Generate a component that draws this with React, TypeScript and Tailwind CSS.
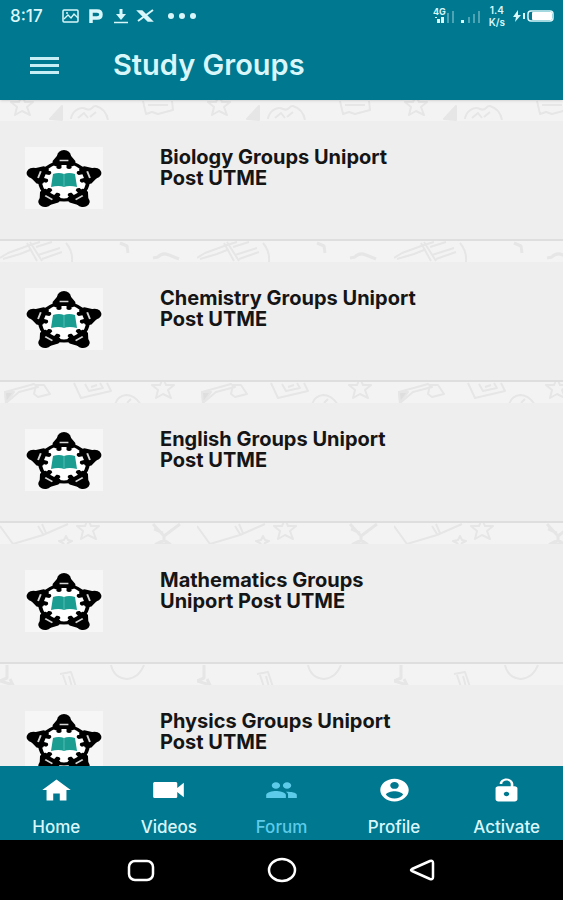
import type { ReactNode } from 'react';
import type { IconType } from 'react-icons';
import { IoMdContact, IoMdHome, IoMdPeople, IoMdUnlock, IoMdVideocam } from 'react-icons/io';

interface Tab {
  label: string;
  icon: IconType;
  active?: boolean;
}

const groups = [
  'Biology Groups Uniport Post UTME',
  'Chemistry Groups Uniport Post UTME',
  'English Groups Uniport Post UTME',
  'Mathematics Groups Uniport Post UTME',
  'Physics Groups Uniport Post UTME',
];

const tabs: Tab[] = [
  { label: 'Home', icon: IoMdHome },
  { label: 'Videos', icon: IoMdVideocam },
  { label: 'Forum', icon: IoMdPeople, active: true },
  { label: 'Profile', icon: IoMdContact },
  { label: 'Activate', icon: IoMdUnlock },
];

const STAR = 'M0-11 3-4 11-4 5 1 8 9 0 5-7 9-5 1-11-4-3-4Z';

// School doodles that show between the cards, one set per row
const doodles: ReactNode[] = [
  <>
    <path d={STAR} transform="translate(22 6)" />
    <path d="M50 19 62 6V20Z" fill="#e6e6e6" />
    <path d="M71 19C72 11 80 6 86 9S92 5 96 6Q106 9 108 20M78 18 84 13 88 18M90 17 96 12" />
    <path d="M143 1 146 14 152 12 158 14 173 10 172 1M148 5H168" />
  </>,
  <>
    <path d="M0 17 8 12 30 4 40 1M3 18 20 13 30 9M27 2 37 20M30 1 42 20" />
    <path d="M36 6 52 1M38 14 60 7M42 18 62 11M66 2Q73 10 72 21" />
    <path d="M120 2 127 5 128 12" strokeWidth="3" />
    <path d="M153 17 158 16Q162 11 169 14L179 18" strokeWidth="3" />
  </>,
  <>
    <path d="M5 10 34 2 38 5 19 10 6 21Z" />
    <path d="M5 10 14 10 6 21Z" fill="#dedede" />
    <path d="M36 3 44 3 50 12 38 15 34 12Z" />
    <path d="M74 1 81 16 111 9 107 1M85 2 89 9 103 6 100 1M91 5 97 3" />
    <path d="M115 23Q117 14 126 13 135 13 141 23M127 21 131 17" />
    <path d={STAR} transform="translate(163 7)" />
  </>,
  <>
    <path d="M0 3 13 21 43 12 68 1M38 3 43 11M42 1 46 10" />
    <path d="M66 13 68 17 72 18 68 20 66 24 63 20 59 18 64 17Z" />
    <path d={STAR} transform="translate(88 7)" />
    <path d="M153 1 164 13 180 1M154 6 163 10M164 11V17L156 21H170L164 17" strokeWidth="3" />
  </>,
  <>
    <path d="M7 1V14L0 17 13 21 10 15" strokeWidth="3" />
    <path d="M60 10 71 8 76 23M63 11 67 23M69 12 72 23" />
    <path d="M111 1Q114 14 127 15 139 14 144 1" />
  </>,
];

function DoodleStrip({ index }: { index: number }) {
  return (
    <svg className="block h-[21px] w-full bg-[#f3f3f3]" aria-hidden="true">
      <defs>
        <pattern id={`doodle-${index}`} width="197" height="21" patternUnits="userSpaceOnUse">
          <g fill="none" stroke="#e6e6e6" strokeWidth="2" strokeLinejoin="round">
            {doodles[index]}
          </g>
        </pattern>
      </defs>
      <rect width="100%" height="100%" fill={`url(#doodle-${index})`} />
    </svg>
  );
}

function GroupLogo() {
  return (
    <svg viewBox="0 0 78 62" className="h-[62px] w-[78px] shrink-0 bg-[#f6f6f6]" aria-hidden="true">
      <g transform="translate(39 34) scale(1.26 1)">
        <circle r="19" fill="#fff" stroke="#000" strokeWidth="3" />
        {[0, 72, 144, 216, 288].map((angle) => (
          <g key={angle} transform={`rotate(${angle})`}>
            <circle cy="-25.500" r="5.400" />
            <path d="M-5-26Q-7-23-9-20L-9-17Q-7-14-6-15L-6-13Q-4-11-2-13L-2-16H2L2-13Q4-11 6-13L6-15Q7-14 9-17L9-20Q7-23 5-26Z" />
            <path d="M-3.500-20.500H3.500" fill="none" stroke="#d5d5d5" strokeWidth="1.500" />
          </g>
        ))}
      </g>
      <path d="M28 27Q34 25 39 27 44 25 50 27L52 40Q44 38 39 40 34 38 26 40Z" fill="#1b9d91" />
      <path d="M39 27V40" stroke="#54bdb2" strokeWidth="1" />
    </svg>
  );
}

function StatusBar() {
  return (
    <div className="flex h-8 items-center pr-2 pl-[10px] text-[#d9f7fb]">
      <span className="w-[51px] text-[17px] leading-5 font-medium">8:17</span>
      <svg viewBox="0 0 138 16" className="h-4 w-[138px]" fill="none" stroke="currentColor" aria-hidden="true">
        <rect x="2" y="2" width="15" height="12" rx="1" strokeWidth="1.500" />
        <path d="M3 11 7 7 10 10 13 6 17 10M5 5H7" strokeWidth="1.300" />
        <path d="M30 15V3H36Q40 3 40 6.500T36 10H31" strokeWidth="3.500" />
        <path d="M60 1V7" strokeWidth="3" />
        <path d="M55 6H65L60 12Z" fill="currentColor" stroke="none" />
        <path d="M53 14.500H67" strokeWidth="1.500" />
        <path d="M77 3H81L91 13H87Z" fill="currentColor" strokeWidth="1.500" />
        <path d="M92 2 77 13" strokeWidth="2" />
        <g fill="currentColor" stroke="none">
          <circle cx="110" cy="8" r="3" />
          <circle cx="121" cy="8" r="3" />
          <circle cx="132" cy="8" r="3" />
        </g>
      </svg>
      <div className="ml-auto flex items-center">
        <svg viewBox="0 0 48 18" className="mr-2 h-[18px] w-12" fill="currentColor" aria-hidden="true">
          <text x="0" y="8" fontSize="9" fontWeight="700">4G</text>
          <path d="M4 12H7V16H4ZM8 10H11V16H8ZM2 10H4V11H2Z" />
          <path d="M14 6H16V16H14ZM19 4H21V16H19ZM35 10H37V16H35ZM40 7H42V16H40ZM45 4H47V16H45Z" opacity="0.350" />
          <path d="M28 13H31V16H28Z" />
        </svg>
        <span className="mr-2 flex flex-col text-center text-[10px] leading-3 font-semibold">
          <span>1.4</span>
          <span>K/s</span>
        </span>
        <svg viewBox="0 0 42 16" className="h-4 w-[42px]" fill="currentColor" aria-hidden="true">
          <path d="M5 2 0 9H3L2 14 8 7H5ZM10 5H12V11H10Z" />
          <rect x="15" y="3" width="25" height="10" rx="3" fill="none" stroke="currentColor" strokeWidth="1.500" />
          <rect x="19" y="4" width="20" height="8" rx="1" className="fill-white" />
        </svg>
      </div>
    </div>
  );
}

export default function App() {
  return (
    <div className="flex h-screen flex-col bg-[#eeeeee] font-['Inter',sans-serif]">
      <header className="relative shrink-0 bg-[#00788f] shadow-sm">
        <StatusBar />
        <div className="flex h-[68px] items-center pb-[2px] pl-[30px]">
          <button type="button" aria-label="Menu" className="flex w-[29px] flex-col gap-1">
            <span className="h-[3px] bg-[#c8eef5]" />
            <span className="h-[3px] bg-[#c8eef5]" />
            <span className="h-[3px] bg-[#c8eef5]" />
          </button>
          <h1 className="ml-[54px] text-[29px] leading-8 font-semibold text-[#d9f7fb]">Study Groups</h1>
        </div>
      </header>

      <main className="min-h-0 flex-1 overflow-hidden">
        <ul>
          {groups.map((name, index) => (
            <li key={name}>
              <DoodleStrip index={index} />
              <a
                href="#"
                className="flex h-[120px] items-start gap-[57px] border-b-2 border-[#dedede] bg-[#eeeeee] pt-[26px] pl-[25px]"
              >
                <GroupLogo />
                <span className="w-[264px] text-[20px] leading-[21px] font-bold text-[#151515]">{name}</span>
              </a>
            </li>
          ))}
        </ul>
      </main>

      <nav className="grid h-[74px] shrink-0 grid-cols-5 bg-[#00788f]">
        {tabs.map(({ label, icon: Icon, active }) => (
          <a
            key={label}
            href="#"
            className={`flex flex-col items-center gap-[13px] pt-[10px] ${active ? 'text-[#5ccbe9]' : 'text-[#d9f7fb]'}`}
          >
            <Icon
              preserveAspectRatio="none"
              className={`h-7 w-[35px] shrink-0 ${active ? '' : 'text-white'}`}
            />
            <span className="text-[17px] leading-5 font-medium">{label}</span>
          </a>
        ))}
      </nav>

      <div className="grid h-[60px] shrink-0 grid-cols-3 items-center justify-items-center bg-black px-[12.5%] text-white">
        <button type="button" aria-label="Recent apps">
          <svg viewBox="0 0 30 26" className="h-[26px] w-[30px]" fill="none" stroke="currentColor" strokeWidth="2.500">
            <rect x="3" y="4" width="24" height="19" rx="6" />
          </svg>
        </button>
        <button type="button" aria-label="Home screen">
          <svg viewBox="0 0 30 26" className="h-[26px] w-[30px]" fill="none" stroke="currentColor" strokeWidth="2.500">
            <ellipse cx="15" cy="13" rx="13" ry="11" />
          </svg>
        </button>
        <button type="button" aria-label="Back">
          <svg
            viewBox="0 0 30 26"
            className="h-[26px] w-[30px]"
            fill="none"
            stroke="currentColor"
            strokeWidth="2.500"
            strokeLinejoin="round"
          >
            <path d="M5 12 23 4Q26 3 26 6V20Q26 23 23 22L5 14Q3 13 5 12Z" />
          </svg>
        </button>
      </div>
    </div>
  );
}
